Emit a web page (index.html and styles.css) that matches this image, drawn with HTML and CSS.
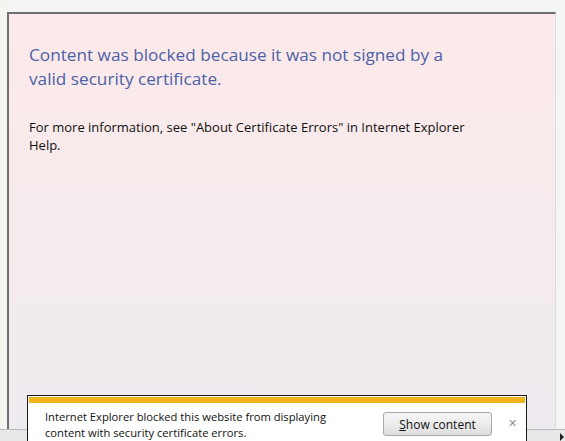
FILE: index.html
```html
<!DOCTYPE html>
<html lang="en">
<head>
<meta charset="utf-8">
<title>Certificate error</title>
<link rel="stylesheet" href="styles.css">
</head>
<body>
<div class="window">
  <div class="page">
    <div class="panel">
      <h1 class="title">Content was blocked because it was not signed by a valid security certificate.</h1>
      <p class="info">For more information, see "About Certificate Errors" in Internet Explorer Help.</p>
    </div>
  </div>
  <div class="hscroll"><span class="arrow"></span></div>
  <div class="notify">
    <div class="notify-stripe"></div>
    <div class="notify-body">
      <p class="notify-text">Internet Explorer blocked this website from displaying content with security certificate errors.</p>
      <button class="show-btn"><u>S</u>how content</button>
      <span class="close">&#x2715;</span>
    </div>
  </div>
</div>
</body>
</html>
```

FILE: styles.css
```css
html, body {
  margin: 0;
  padding: 0;
}
body {
  font-family: "Open Sans", "Noto Sans", "Liberation Sans", sans-serif;
  background: #f3f6f4;
}
.window {
  position: relative;
  width: 565px;
  height: 441px;
  overflow: hidden;
  display: flex;
  flex-direction: column;
  background: linear-gradient(90deg, #f5f3ee 0, #f3f6f4 10px);
}
.page {
  flex: 1;
  display: flex;
  padding: 12px 9px 0 7px;
  min-height: 0;
}
.panel {
  flex: 1;
  border-left: 2px solid #6e6e6e;
  border-top: 2px solid #6e6e6e;
  border-right: 1px solid #dcdcdc;
  background: linear-gradient(180deg, #fde9ea 0%, #f6ebec 45%, #eeebf0 100%);
  padding: 29px 20px 0 20px;
}
.title {
  margin: 0;
  width: 440px;
  font-size: 17.2px;
  line-height: 24px;
  font-weight: normal;
  color: #4c61a6;
}
.info {
  margin: 27px 0 0 0;
  width: 445px;
  font-size: 13px;
  line-height: 18px;
  color: #111;
}
.hscroll {
  height: 11px;
  background: #e8e8e8;
  border-top: 1px solid #b9b9b9;
  position: relative;
}
.arrow {
  position: absolute;
  right: 1px;
  top: 3px;
  width: 0;
  height: 0;
  border-top: 4px solid transparent;
  border-bottom: 4px solid transparent;
  border-left: 4px solid #222;
}
.notify {
  position: absolute;
  left: 27px;
  top: 395px;
  width: 498px;
  height: 60px;
  border: 1px solid #1a1a1a;
  background: #fff;
}
.notify-stripe {
  height: 6px;
  background: #f0b31a;
  margin: 1px 1px 0 1px;
}
.notify-body {
  display: flex;
  align-items: flex-start;
  padding: 6px 0 0 17px;
}
.notify-text {
  margin: 0;
  width: 300px;
  font-size: 11.2px;
  line-height: 16px;
  color: #111;
}
.show-btn {
  margin: 3px 0 0 38px;
  width: 109px;
  height: 24px;
  border: 1px solid #a9a9a9;
  border-radius: 3px;
  background: linear-gradient(180deg, #f6f6f6 0%, #ececec 50%, #dedede 100%);
  font-family: inherit;
  font-size: 12px;
  color: #111;
  padding: 0;
}
.close {
  margin: 6px 0 0 16px;
  font-size: 11px;
  color: #909090;
}
```
